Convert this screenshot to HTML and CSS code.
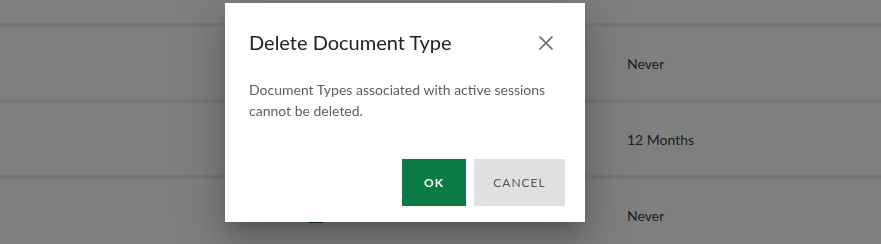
FILE: index.html
```html
<!DOCTYPE html>
<html>
<head>
<meta charset="utf-8">
<link rel="stylesheet" href="styles.css">
</head>
<body>
<div class="table">
  <div class="row row-top"></div>
  <div class="row"><div class="cell-name"></div><div class="cell-flag"></div><div class="cell-retain">Never</div></div>
  <div class="row"><div class="cell-name"></div><div class="cell-flag"></div><div class="cell-retain">12 Months</div></div>
  <div class="row"><div class="cell-name"></div><div class="cell-flag"><span class="flag"></span></div><div class="cell-retain">Never</div></div>
</div>
<div class="overlay"></div>
<div class="dialog" role="dialog">
  <div class="dialog-head">
    <h2 class="dialog-title">Delete Document Type</h2>
    <button class="close" aria-label="Close">
      <svg width="14" height="14" viewBox="0 0 14 14"><path d="M0.5 0.5L13.5 13.5M13.5 0.5L0.5 13.5" stroke="#6e6e6e" stroke-width="1.6" fill="none"/></svg>
    </button>
  </div>
  <p class="dialog-body">Document Types associated with active sessions cannot be deleted.</p>
  <div class="dialog-actions">
    <button class="btn btn-ok">OK</button>
    <button class="btn btn-cancel">CANCEL</button>
  </div>
</div>
</body>
</html>
```
FILE: styles.css
```css
html, body {
  margin: 0;
  padding: 0;
  background: #ffffff;
  font-family: Lato, "Open Sans", sans-serif;
  overflow: hidden;
}
.table {
  width: 881px;
}
.row {
  display: grid;
  grid-template-columns: 309px 318px 1fr;
  align-items: center;
  height: 72px;
  border-top: 4px solid #eeeeee;
}
.row-top {
  height: 23px;
  border-top: 0;
}
.cell-retain {
  font-size: 14px;
  color: #3c3c3c;
}
.cell-flag {
  display: flex;
  align-items: center;
  height: 100%;
}
.flag {
  display: block;
  width: 14px;
  height: 14px;
  margin-top: 1px;
  background: #0a6b3c;
}
.overlay {
  position: fixed;
  inset: 0;
  background: rgba(0, 0, 0, 0.5);
}
.dialog {
  position: absolute;
  left: 225px;
  top: 3px;
  width: 360px;
  height: 219px;
  background: #ffffff;
  box-sizing: border-box;
  display: flex;
  flex-direction: column;
  box-shadow: 0 11px 15px -7px rgba(0,0,0,0.2), 0 24px 38px 3px rgba(0,0,0,0.14), 0 9px 46px 8px rgba(0,0,0,0.12);
}
.dialog-head {
  display: flex;
  justify-content: space-between;
  align-items: center;
  padding: 25px 32px 0 24px;
}
.dialog-title {
  margin: 0;
  font-size: 20px;
  font-weight: 400;
  line-height: 28px;
  color: #222222;
}
.close {
  border: 0;
  background: none;
  padding: 0;
  width: 14px;
  height: 14px;
  display: flex;
  margin-top: 1px;
}
.dialog-body {
  margin: 23px 24px 0 24px;
  font-size: 14px;
  line-height: 21px;
  color: #5f5f5f;
}
.dialog-actions {
  margin-top: auto;
  display: flex;
  justify-content: flex-end;
  gap: 8px;
  padding: 0 20px 16px 0;
}
.btn {
  border: 0;
  height: 47px;
  font-family: Lato, "Open Sans", sans-serif;
  font-size: 12px;
  letter-spacing: 1px;
  cursor: pointer;
  padding: 0;
}
.btn-ok {
  width: 64px;
  background: #0b7b45;
  color: #ffffff;
  font-weight: 700;
}
.btn-cancel {
  width: 91px;
  background: #e0e0e0;
  color: #555555;
}
```
